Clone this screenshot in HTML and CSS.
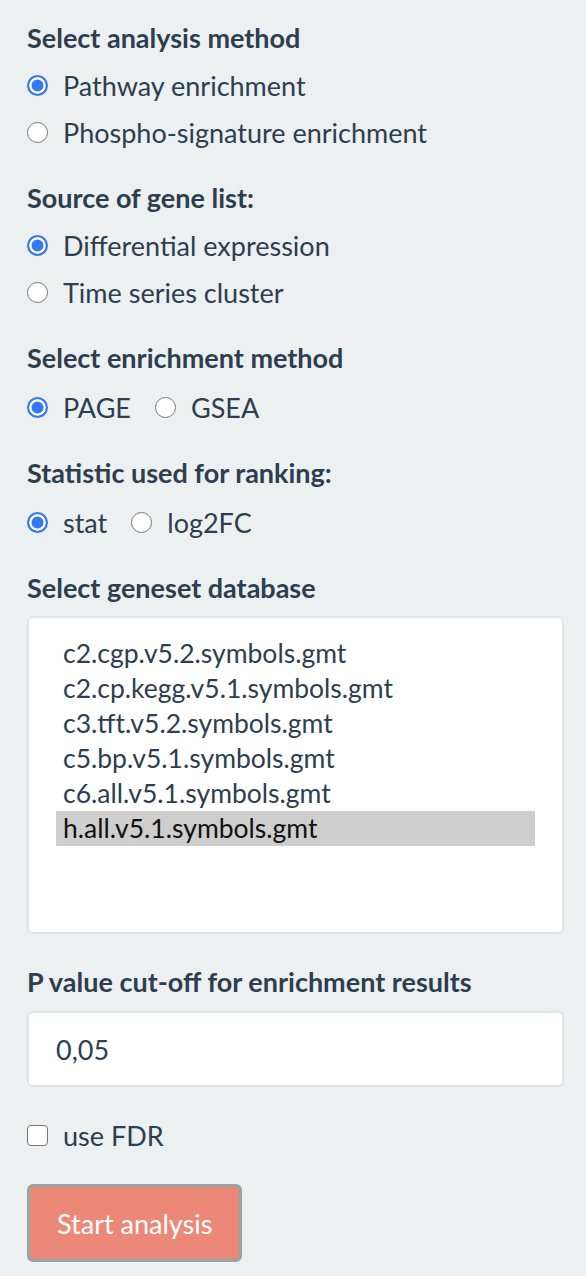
FILE: index.html
```html
<!DOCTYPE html>
<html>
<head>
<meta charset="utf-8">
<link rel="stylesheet" href="styles.css">
</head>
<body>
<div class="panel">
  <div class="group">
    <div class="label">Select analysis method</div>
    <label class="opt"><input type="radio" name="m" checked><span>Pathway enrichment</span></label>
    <label class="opt"><input type="radio" name="m"><span>Phospho-signature enrichment</span></label>
  </div>
  <div class="group">
    <div class="label">Source of gene list:</div>
    <label class="opt"><input type="radio" name="s" checked><span>Differential expression</span></label>
    <label class="opt"><input type="radio" name="s"><span>Time series cluster</span></label>
  </div>
  <div class="group">
    <div class="label">Select enrichment method</div>
    <div class="inline">
      <label class="opt"><input type="radio" name="e" checked><span>PAGE</span></label>
      <label class="opt"><input type="radio" name="e"><span>GSEA</span></label>
    </div>
  </div>
  <div class="group">
    <div class="label">Statistic used for ranking:</div>
    <div class="inline">
      <label class="opt"><input type="radio" name="r" checked><span>stat</span></label>
      <label class="opt"><input type="radio" name="r"><span>log2FC</span></label>
    </div>
  </div>
  <div class="group">
    <div class="label gap">Select geneset database</div>
    <div class="listbox" role="listbox">
      <div class="item">c2.cgp.v5.2.symbols.gmt</div>
      <div class="item">c2.cp.kegg.v5.1.symbols.gmt</div>
      <div class="item">c3.tft.v5.2.symbols.gmt</div>
      <div class="item">c5.bp.v5.1.symbols.gmt</div>
      <div class="item">c6.all.v5.1.symbols.gmt</div>
      <div class="item selected">h.all.v5.1.symbols.gmt</div>
    </div>
  </div>
  <div class="group pgroup">
    <div class="label pgap">P value cut-off for enrichment results</div>
    <input class="field" type="text" value="0,05">
  </div>
  <label class="opt check"><input type="checkbox"><span>use FDR</span></label>
  <button class="btn">Start analysis</button>
</div>
</body>
</html>
```
FILE: styles.css
```css
html, body {
  margin: 0;
  padding: 0;
  background: #ecf0f1;
}
body {
  font-family: Lato, "Open Sans", sans-serif;
  font-size: 27px;
  color: #2c3e50;
}
.panel {
  padding: 20px 22px 0 27px;
  display: flex;
  flex-direction: column;
  align-items: flex-start;
}
.group {
  display: flex;
  flex-direction: column;
  align-items: stretch;
  align-self: stretch;
  margin-bottom: 24px;
}
.label {
  font-weight: 700;
  height: 36px;
  line-height: 36px;
  margin-bottom: 6px;
  white-space: nowrap;
}
.label.gap {
  margin-bottom: 10px;
}
.label.pgap {
  margin-bottom: 11px;
}
.opt {
  display: flex;
  align-items: center;
  height: 47px;
  cursor: pointer;
  white-space: nowrap;
}
.opt span {
  line-height: 1;
}
.inline {
  display: flex;
  margin-top: 2px;
}
.inline .opt {
  margin-right: 24px;
}
.opt input[type="radio"] {
  -webkit-appearance: none;
  appearance: none;
  width: 21px;
  height: 21px;
  margin: 0 15px 0 0;
  border: 1.5px solid #767676;
  border-radius: 50%;
  background: #fff;
  box-sizing: border-box;
  flex: none;
}
.opt input[type="radio"]:checked {
  border: 2px solid #3478f6;
  background: #3478f6;
  box-shadow: inset 0 0 0 2.5px #fff;
}
.opt input[type="checkbox"] {
  -webkit-appearance: none;
  appearance: none;
  width: 21px;
  height: 21px;
  margin: 0 15px 0 0;
  border: 1.5px solid #767676;
  border-radius: 4px;
  background: #fff;
  box-sizing: border-box;
  flex: none;
}
.listbox {
  height: 318px;
  box-sizing: border-box;
  border: 2px solid #dce4ec;
  border-radius: 6px;
  background: #fff;
  padding: 18px 27px 0 27px;
}
.item {
  height: 35px;
  line-height: 35px;
  padding-left: 7px;
  white-space: nowrap;
  font-size: 26.5px;
}
.item.selected {
  background: #cecece;
  color: #111;
}
.pgroup {
  margin-top: 6px;
  margin-bottom: 25px;
}
.field {
  height: 76px;
  box-sizing: border-box;
  border: 2px solid #dce4ec;
  border-radius: 6px;
  background: #fff;
  padding: 0 27px;
  font-family: inherit;
  font-size: 27px;
  color: #2c3e50;
  outline: none;
}
.check {
  margin-bottom: 25px;
}
.btn {
  height: 78px;
  box-sizing: border-box;
  border: 3px solid #95a5a6;
  border-radius: 6px;
  background: #ec8877;
  color: #fff;
  font-family: inherit;
  font-size: 27px;
  padding: 0 27px;
}
```
